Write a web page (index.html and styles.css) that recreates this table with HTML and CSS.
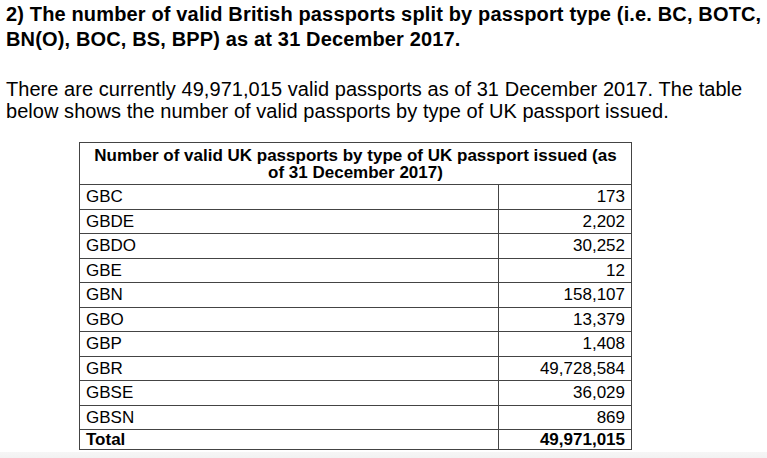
FILE: index.html
```html
<!DOCTYPE html>
<html>
<head>
<meta charset="utf-8">
<link rel="stylesheet" href="styles.css">
</head>
<body>
<div class="page">
  <h2 class="question">2) The number of valid British passports split by passport type (i.e. BC, BOTC, BN(O), BOC, BS, BPP) as at 31 December 2017.</h2>
  <p class="intro">There are currently 49,971,015 valid passports as of 31 December 2017. The table below shows the number of valid passports by type of UK passport issued.</p>
  <table class="data">
    <thead>
      <tr><th colspan="2">Number of valid UK passports by type of UK passport issued (as of 31 December 2017)</th></tr>
    </thead>
    <tbody>
      <tr><td>GBC</td><td class="num">173</td></tr>
      <tr><td>GBDE</td><td class="num">2,202</td></tr>
      <tr><td>GBDO</td><td class="num">30,252</td></tr>
      <tr><td>GBE</td><td class="num">12</td></tr>
      <tr><td>GBN</td><td class="num">158,107</td></tr>
      <tr><td>GBO</td><td class="num">13,379</td></tr>
      <tr><td>GBP</td><td class="num">1,408</td></tr>
      <tr><td>GBR</td><td class="num">49,728,584</td></tr>
      <tr><td>GBSE</td><td class="num">36,029</td></tr>
      <tr><td>GBSN</td><td class="num">869</td></tr>
      <tr class="total"><td>Total</td><td class="num">49,971,015</td></tr>
    </tbody>
  </table>
</div>
<div class="footer-strip"></div>
</body>
</html>
```
FILE: styles.css
```css
html, body {
  margin: 0;
  padding: 0;
  background: #ffffff;
}
body {
  font-family: "Liberation Sans", Arial, sans-serif;
  color: #000;
  height: 458px;
  overflow: hidden;
  display: flex;
  flex-direction: column;
}
.page {
  padding: 2px 0 0 6px;
}
.question {
  margin: 0;
  font-size: 20px;
  font-weight: bold;
  line-height: 25px;
  letter-spacing: 0.15px;
  width: 762px;
}
.intro {
  margin: 26px 0 0 0;
  font-size: 20px;
  line-height: 22px;
  letter-spacing: 0.05px;
  width: 762px;
}
.data {
  margin: 20px 0 0 73px;
  border-collapse: collapse;
  width: 553px;
  font-size: 17px;
}
.data th {
  border: 1px solid #444;
  font-weight: bold;
  text-align: center;
  line-height: 17px;
  padding: 3px 8px;
  height: 42px;
  box-sizing: border-box;
}
.data td {
  border: 1px solid #444;
  height: 24.5px;
  padding: 1px 6px 0 6px;
  line-height: 18px;
  vertical-align: middle;
  box-sizing: border-box;
}
.data td:first-child {
  width: 419px;
}
.data td.num {
  text-align: right;
}
.data tr.total td {
  font-weight: bold;
  height: 20px;
  padding-top: 0;
}
.footer-strip {
  flex: 1;
  margin-top: 2px;
  background: linear-gradient(#f6f6f6, #f2f2f2);
}
```
